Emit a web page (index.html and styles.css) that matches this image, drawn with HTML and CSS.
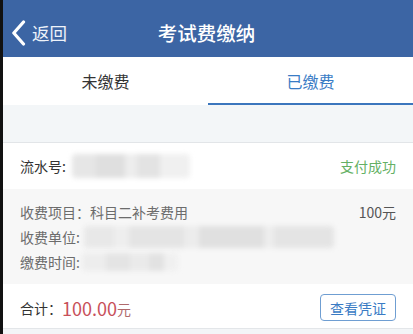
FILE: index.html
```html
<!DOCTYPE html>
<html lang="zh">
<head>
<meta charset="utf-8">
<link rel="stylesheet" href="styles.css">
</head>
<body>
<div class="app">
  <header class="nav">
    <div class="back">
      <svg class="chev" width="15" height="26" viewBox="0 0 15 26"><path d="M12.5 2 L2.8 13 L12.5 24" fill="none" stroke="#fff" stroke-width="3.2" stroke-linecap="round" stroke-linejoin="round"/></svg>
      <span>返回</span>
    </div>
    <div class="title">考试费缴纳</div>
  </header>
  <nav class="tabs">
    <div class="tab">未缴费</div>
    <div class="tab active">已缴费</div>
  </nav>
  <div class="band"></div>
  <div class="row serial">
    <span class="label">流水号:</span>
    <span class="blur b1"></span>
    <span class="ok">支付成功</span>
  </div>
  <div class="details">
    <div class="line"><span>收费项目：科目二补考费用</span><span class="amt">100元</span></div>
    <div class="line"><span>收费单位:</span><span class="blur b2"></span></div>
    <div class="line"><span>缴费时间:</span><span class="blur b3"></span></div>
  </div>
  <div class="row total">
    <span class="label">合计：</span><span class="money">100.00</span><span class="yuan">元</span>
    <button class="btn">查看凭证</button>
  </div>
</div>
</body>
</html>
```
FILE: styles.css
```css
html, body { margin: 0; padding: 0; }
body {
  background: #111;
  font-family: "Noto Sans CJK SC", "Noto Sans", sans-serif;
  width: 413px; height: 334px; overflow: hidden;
}
.app {
  margin-left: 3px;
  height: 334px;
  background: #f3f5f7;
}
.nav {
  height: 57px;
  box-sizing: border-box;
  padding-top: 8px;
  background: #3c65a4;
  display: flex;
  align-items: center;
  position: relative;
  color: #fff;
}
.back {
  display: flex;
  align-items: center;
  padding-left: 8px;
  font-size: 17.5px;
  gap: 6px;
  color: #eef3fa;
}
.title {
  position: absolute;
  left: 0; right: 0;
  top: 8px; bottom: 0;
  display: flex; align-items: center; justify-content: center;
  font-size: 19.5px;
  font-weight: 500;
  margin-left: -3px;
  pointer-events: none;
}
.tabs {
  display: flex;
  height: 48px;
  background: #fff;
}
.tab {
  flex: 1;
  display: flex; align-items: center; justify-content: center;
  font-size: 16px;
  color: #333;
  box-sizing: border-box;
  padding-top: 1px;
  border-bottom: 2px solid transparent;
}
.tab.active { color: #3a7cc5; border-bottom-color: #3b76bd; }
.band {
  height: 37px;
  background: #f3f6f8;
  border-bottom: 1px solid #e2e5e8;
}
.row {
  display: flex;
  align-items: center;
  background: #fff;
  padding: 0 17px;
  font-size: 14px;
  color: #333;
}
.serial { height: 46px; }
.ok { margin-left: auto; color: #64b064; }
.blur {
  display: inline-block;
  filter: blur(2.5px);
  border-radius: 4px;
}
.b1 {
  width: 118px; height: 24px; margin-left: 6px;
  background: linear-gradient(90deg, #e6e6e6 0 20%, #dfdfdf 20% 45%, #ededed 45% 55%, #e3e3e3 55% 75%, #f0f0f0 75% 100%);
}
.details {
  background: #f7f7f7;
  height: 95px;
  box-sizing: border-box;
  padding: 10px 17px 0;
  font-size: 14px;
  color: #6c6c6c;
}
.line {
  display: flex; align-items: center;
  height: 25px;
}
.amt { margin-left: auto; color: #555; }
.b2 {
  width: 250px; height: 22px; margin-left: 4px;
  background: linear-gradient(90deg, #e8e8e8 0 12%, #eeeeee 12% 18%, #e4e4e4 18% 40%, #ececec 40% 46%, #e0e0e0 46% 72%, #ededed 72% 76%, #e4e4e4 76% 100%);
}
.b3 {
  width: 96px; height: 18px; margin-left: 2px;
  background: linear-gradient(90deg, #ededed 0 25%, #e4e4e4 25% 50%, #eaeaea 50% 70%, #e2e2e2 70% 85%, #f0f0f0 85% 100%);
}
.total {
  height: 45px;
  box-sizing: border-box;
  padding-top: 3px;
  border-bottom: 1px solid #e3e6e9;
}
.money { color: #c8505a; font-size: 18px; margin-left: 0; }
.yuan { color: #b06a6c; font-size: 14px; padding-top: 2px; }
.btn {
  margin-left: auto;
  width: 76px; height: 27px;
  background: #fff;
  border: 1px solid #6f9ed2;
  border-radius: 4px;
  color: #3a7bc4;
  font-family: inherit;
  font-size: 14px;
  padding: 0;
}
```
